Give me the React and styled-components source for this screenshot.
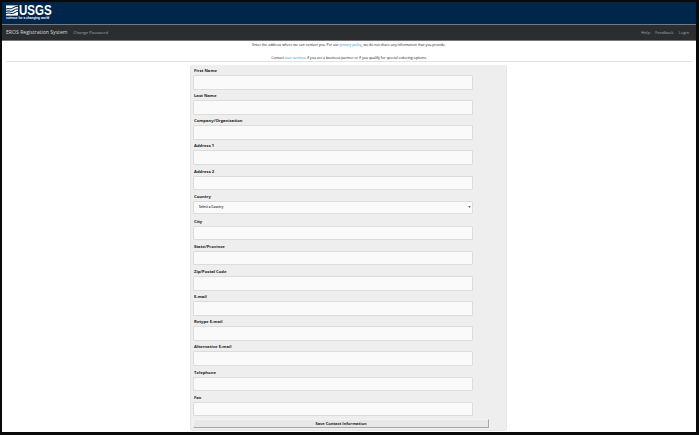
import React from "react";
import styled, { createGlobalStyle } from "styled-components";

const Global = createGlobalStyle`
  html, body { margin: 0; padding: 0; background: #000; }
  body { font-family: "Open Sans", "Liberation Sans", sans-serif; }
  * { box-sizing: border-box; }
`;
const Frame = styled.div`
  width: 699px; height: 435px; overflow: hidden; background: #fff;
  border: solid #0a0a0a; border-width: 2px 3px 3px 2px;
  display: flex; flex-direction: column;
`;
const Banner = styled.header`
  height: 23px; background: #00264c; flex: none;
  display: flex; align-items: flex-start; padding: 2px 0 0 4px;
  border-bottom: 1px solid #6f7a85;
`;
const Logo = styled.div`display: flex; flex-direction: column; color: #fff; width: 48px;`;
const LogoTop = styled.div`display: flex; align-items: center; gap: 1px; height: 12px;`;
const LogoMark = styled.svg`flex: none; width: 12px; height: 11px;`;
const LogoWord = styled.span`
  font: 700 15px/12px "Liberation Sans", sans-serif; display: inline-block; flex: none;
  transform: scaleX(.77); transform-origin: left center; margin-right: -10px;
`;
const Tagline = styled.span`font: 700 3.15px/5px "Liberation Sans", sans-serif; white-space: nowrap;`;
const NavBar = styled.nav`
  height: 16px; flex: none; background: #2b2e31; border-bottom: 1px solid #777;
  display: flex; align-items: center; padding: 0 7px 1px 4px;
`;
const Brand = styled.span`font-size: 5.15px; color: #d8d8d8; margin-right: 6px;`;
const NavLink = styled.a`font-size: 4.15px; color: #a4a6a8; margin-left: ${p => p.$gap || 0}px;`;
const Spacer = styled.div`flex: 1;`;
const Main = styled.main`flex: 1; display: flex; flex-direction: column; align-items: center; min-height: 0;`;
const Notes = styled.div`
  width: 100%; height: 20px; flex: none; text-align: center;
  font-size: 3.53px; line-height: 8px; color: #111;
`;
const Note = styled.p`margin: 0; height: 12.5px;`;
const Link = styled.a`color: #1a86c8;`;
const Rule = styled.hr`
  border: 0; border-top: 1px solid #e2e2e2; margin: 0 0 3px 4px; width: 686px; align-self: flex-start; height: 0; flex: none;
`;
const Panel = styled.form`
  width: 317px; height: 366px; flex: none; margin: 0 0 0 -1px; background: #eee; border-radius: 3px;
  border: 1px solid #e6e6e6; border-top: 0;
  padding: 3px 2px 0 2px; display: flex; flex-direction: column;
`;
const Field = styled.div`height: 25.13px; flex: none; display: flex; flex-direction: column;`;
const Label = styled.label`font-size: 4.2px; font-weight: 700; line-height: 6.5px; height: 7px; color: #222; padding-left: 1px; white-space: nowrap;`;
const Input = styled.input`
  width: 280px; height: 14.5px; background: #fafafa; border: 1px solid #dcdcdc; padding: 0 3px;
  border-radius: 1px; outline: 0; display: block;
`;
const SelectBox = styled.div`
  width: 280px; height: 13px; background: #fafafa; border: 1px solid #dcdcdc; border-radius: 1px;
  display: flex; align-items: center; justify-content: space-between; padding: 0 1px 0 5px;
  font-size: 3.1px; font-weight: 600; color: #222;
`;
const Caret = styled.svg`width: 3px; height: 2px; fill: #666;`;
const Save = styled.button`
  width: 296px; height: 9px; margin-top: -0.5px; padding: 0; font: 700 4px/7px "Open Sans", sans-serif; color: #222;
  background: #e8e8e8; border: 1px solid #f2f2f2; border-right-color: #a8a8a8; border-bottom-color: #a8a8a8;
`;

const fields = ["First Name","Last Name","Company/Organization","Address 1","Address 2","Country","City","State/Province","Zip/Postal Code","E-mail","Retype E-mail","Alternative E-mail","Telephone","Fax"];

export default function App() {
  return (
    <>
      <Global />
      <Frame>
        <Banner>
          <Logo>
            <LogoTop>
              <LogoMark viewBox="0 0 13 11">
                <rect width="13" height="11" fill="#fff" />
                <path d="M0 4 C3 2 4 5 7 3 S11 1 13 1 M0 6.5 C3 4.5 5 8 8 5.5 S11 4 13 4 M0 9 C3 7 6 10 9 8 S12 6.5 13 6.5" stroke="#00264c" strokeWidth="1.1" fill="none" />
              </LogoMark>
              <LogoWord>USGS</LogoWord>
            </LogoTop>
            <Tagline>science for a changing world</Tagline>
          </Logo>
        </Banner>
        <NavBar>
          <Brand>EROS Registration System</Brand>
          <NavLink>Change Password</NavLink>
          <Spacer />
          <NavLink>Help</NavLink>
          <NavLink $gap={5}>Feedback</NavLink>
          <NavLink $gap={5}>Login</NavLink>
        </NavBar>
        <Main>
          <Notes>
            <Note>Enter the address where we can contact you. Per our <Link>privacy policy</Link>, we do not share any information that you provide.</Note>
            <Note>Contact <Link>user services</Link> if you are a business partner or if you qualify for special ordering options.</Note>
          </Notes>
          <Rule />
          <Panel>
            {fields.map(f => (
              <Field key={f}>
                <Label>{f}</Label>
                {f === "Country" ? (
                  <SelectBox>
                    Select a Country
                    <Caret viewBox="0 0 4 3"><path d="M0 0h4L2 3z" /></Caret>
                  </SelectBox>
                ) : <Input type="text" />}
              </Field>
            ))}
            <Save type="button">Save Contact Information</Save>
          </Panel>
        </Main>
      </Frame>
    </>
  );
}
